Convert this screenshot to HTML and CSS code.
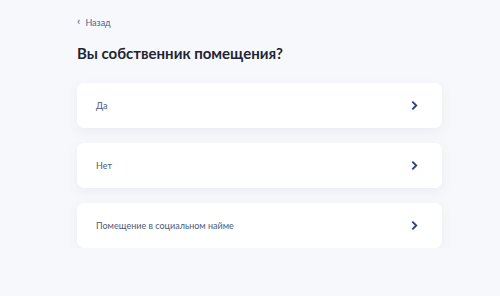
FILE: index.html
```html
<!DOCTYPE html>
<html lang="ru">
<head>
<meta charset="utf-8">
<link rel="stylesheet" href="styles.css">
</head>
<body>
<main class="page">
  <a class="back" href="#"><span class="back-icon">‹</span>Назад</a>
  <h1 class="title">Вы собственник помещения?</h1>
  <ul class="options">
    <li class="option"><span class="label">Да</span><svg class="chev" viewBox="0 0 8 12" width="7" height="11"><path d="M1.5 1.5L6 6l-4.5 4.5" fill="none" stroke="#2b4584" stroke-width="2.2"/></svg></li>
    <li class="option"><span class="label">Нет</span><svg class="chev" viewBox="0 0 8 12" width="7" height="11"><path d="M1.5 1.5L6 6l-4.5 4.5" fill="none" stroke="#2b4584" stroke-width="2.2"/></svg></li>
    <li class="option"><span class="label">Помещение в социальном найме</span><svg class="chev" viewBox="0 0 8 12" width="7" height="11"><path d="M1.5 1.5L6 6l-4.5 4.5" fill="none" stroke="#2b4584" stroke-width="2.2"/></svg></li>
  </ul>
</main>
</body>
</html>
```
FILE: styles.css
```css
html, body {
  margin: 0;
  padding: 0;
  background: #f7f8fb;
  font-family: Lato, "Noto Sans", sans-serif;
}
.page {
  padding: 14px 58px 0 77px;
}
.back {
  display: flex;
  align-items: center;
  gap: 5px;
  color: #4a6496;
  font-size: 9px;
  text-decoration: none;
  height: 16px;
}
.back-icon {
  font-size: 12px;
  line-height: 1;
  position: relative;
  top: -1px;
}
.title {
  margin: 13px 0 0;
  font-size: 15px;
  font-weight: 700;
  color: #1f2533;
  line-height: 20px;
}
.options {
  list-style: none;
  margin: 20px 0 0;
  padding: 0;
  display: flex;
  flex-direction: column;
  gap: 15px;
}
.option {
  height: 45px;
  background: #fff;
  border-radius: 7px;
  box-shadow: 0 4px 12px rgba(60, 80, 130, 0.07);
  display: flex;
  align-items: center;
  justify-content: space-between;
  padding: 0 24px 0 19px;
}
.label {
  font-size: 9px;
  color: #4d5a78;
}
.chev {
  display: block;
}
```
